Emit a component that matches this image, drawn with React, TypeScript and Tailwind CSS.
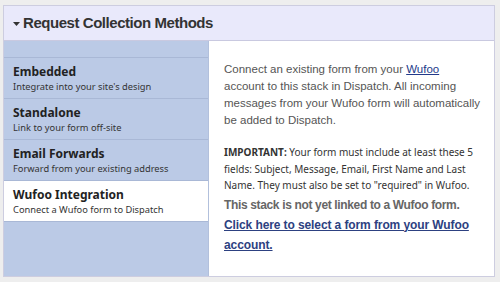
import React from "react";

const items = [
  { t: "Embedded", s: "Integrate into your site's design" },
  { t: "Standalone", s: "Link to your form off-site" },
  { t: "Email Forwards", s: "Forward from your existing address" },
  { t: "Wufoo Integration", s: "Connect a Wufoo form to Dispatch", active: true },
];

export default function App() {
  return (
    <div className="w-[500px] h-[282px] bg-[#eeeeee] pt-[5px] pl-[3px] pr-[5px] overflow-hidden">
      <div className="border border-[#cdcde0] h-[272px] flex flex-col">
        <div className="h-[35px] bg-[#e9e9fb] border-b border-[#c9c9e0] flex items-center pl-[8px] shrink-0">
          <svg width="9" height="6" viewBox="0 0 9 6" className="mr-[2px] mt-[2px]">
            <path d="M1 1 L8 1 L4.5 5 Z" fill="#333" />
          </svg>
          <span className="text-[15px] tracking-[-0.45px] font-bold text-[#333] font-['Liberation_Sans',Arial,sans-serif]">
            Request Collection Methods
          </span>
        </div>
        <div className="flex flex-1 min-h-0">
          <div className="w-[205px] bg-[#bbcae6] flex flex-col border-r border-[#b2c0dc] shrink-0">
            <div className="h-[17px] border-b border-[#a9b8d6]" />
            {items.map((it) => (
              <div
                key={it.t}
                className={`h-[41px] border-b border-[#a9b8d6] pl-[9px] pt-[6px] font-['Noto_Sans',sans-serif] ${
                  it.active ? "bg-white" : ""
                }`}
              >
                <div className="text-[12px] font-bold text-[#222] leading-[15px]">{it.t}</div>
                <div className="text-[9.3px] text-[#333] leading-[14px] mt-[1px]">{it.s}</div>
              </div>
            ))}
          </div>
          <div className="flex-1 bg-white pl-[15px] pr-[14px] pt-[20px]">
            <p className="-mr-[10px] whitespace-nowrap text-[11.5px] leading-[17px] text-[#555] font-['Liberation_Sans',Arial,sans-serif]">
              Connect an existing form from your{" "}
              <span className="text-[#223a8a] underline">Wufoo</span>
              <br />
              account to this stack in Dispatch. All incoming
              <br />
              messages from your Wufoo form will automatically
              <br />
              be added to Dispatch.
            </p>
            <p className="mt-[15px] text-[10px] leading-[16.5px] text-[#333] font-['Noto_Sans',sans-serif]">
              <b>IMPORTANT:</b> Your form must include at least these 5 fields: Subject, Message,
              Email, First Name and Last Name. They must also be set to "required" in Wufoo.
            </p>
            <div className="mt-[1px] text-[12px] leading-[20px] font-bold font-['Liberation_Sans',Arial,sans-serif]">
              <div className="text-[#666] tracking-[-0.35px]">This stack is not yet linked to a Wufoo form.</div>
              <div className="text-[#2d4181] underline tracking-[-0.1px]">
                Click here to select a form from your Wufoo account.
              </div>
            </div>
          </div>
        </div>
      </div>
    </div>
  );
}
